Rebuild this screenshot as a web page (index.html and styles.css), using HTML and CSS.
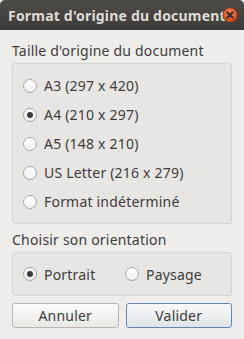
FILE: index.html
```html
<!DOCTYPE html>
<html lang="fr">

<head>
    <meta charset="UTF-8">
    <meta name="viewport" content="width=device-width, initial-scale=1.0">
    <title>Format d'origine du document</title>
    <link rel="stylesheet" href="styles.css">
</head>

<body>
    <div class="fenetre">
        <div class="barre-titre">
            <span class="titre">Format d'origine du document</span>
            <span class="fermer">
                <svg width="16" height="16" viewBox="0 0 16 16">
                    <defs>
                        <radialGradient id="orange" cx="50%" cy="35%" r="60%">
                            <stop offset="0" stop-color="#f58a5a" />
                            <stop offset="1" stop-color="#d9491a" />
                        </radialGradient>
                    </defs>
                    <circle cx="8" cy="8" r="7.2" fill="url(#orange)" stroke="#8c3514" stroke-width="0.8" />
                    <path d="M5.2 5.2 L10.8 10.8 M10.8 5.2 L5.2 10.8" stroke="#3a2e28" stroke-width="2" stroke-linecap="round" />
                </svg>
            </span>
        </div>

        <form class="contenu" id="frmFormat">
            <h2 class="etiquette">Taille d'origine du document</h2>
            <div class="groupe liste">
                <label class="radio"><input type="radio" name="taille" value="a3"><span class="rond"></span>A3 (297 x 420)</label>
                <label class="radio"><input type="radio" name="taille" value="a4" checked><span class="rond"></span>A4 (210 x 297)</label>
                <label class="radio"><input type="radio" name="taille" value="a5"><span class="rond"></span>A5 (148 x 210)</label>
                <label class="radio"><input type="radio" name="taille" value="letter"><span class="rond"></span>US Letter (216 x 279)</label>
                <label class="radio"><input type="radio" name="taille" value="aucun"><span class="rond"></span>Format indéterminé</label>
            </div>

            <h2 class="etiquette">Choisir son orientation</h2>
            <div class="groupe orientation">
                <label class="radio"><input type="radio" name="orientation" value="portrait" checked><span class="rond"></span>Portrait</label>
                <label class="radio"><input type="radio" name="orientation" value="paysage"><span class="rond"></span>Paysage</label>
            </div>

            <div class="actions">
                <button type="button" class="bouton">Annuler</button>
                <button type="submit" class="bouton principal">Valider</button>
            </div>
        </form>
    </div>
</body>

</html>
```

FILE: styles.css
```css
* {
    margin: 0;
    padding: 0;
    box-sizing: border-box;
    font-family: 'Noto Sans', 'Open Sans', sans-serif;
}

html,
body {
    background: #eeedea;
}

body {
    width: 244px;
    height: 339px;
    color: #3c3c3c;
}

.fenetre {
    display: flex;
    flex-direction: column;
    height: 100%;
}

.barre-titre {
    position: relative;
    height: 30px;
    display: flex;
    align-items: center;
    padding-left: 8px;
    background: linear-gradient(#4d4c47, #3c3b37);
    border-radius: 5px 5px 0 0;
}

.titre {
    font-size: 14px;
    font-weight: bold;
    letter-spacing: 0.2px;
    color: #dfdbd2;
    white-space: nowrap;
}

/* le bouton de fermeture chevauche la fin du titre */
.fermer {
    position: absolute;
    right: 6px;
    top: 7px;
    display: flex;
    width: 16px;
    height: 16px;
}

.contenu {
    padding: 12px 12px 0;
    display: flex;
    flex-direction: column;
}

.etiquette {
    font-size: 14px;
    font-weight: normal;
    letter-spacing: 0.2px;
    line-height: 18px;
    margin-bottom: 3px;
}

.groupe {
    background: #e8e6e2;
    border: 1px solid #d5d2cd;
    border-radius: 3px;
    padding: 7px 10px;
}

.liste {
    display: flex;
    flex-direction: column;
    margin-bottom: 7px;
}

.liste .radio {
    height: 29px;
}

.orientation {
    display: grid;
    grid-template-columns: 102px 1fr;
}

.orientation .radio {
    height: 28px;
}

.radio {
    display: flex;
    align-items: center;
    gap: 7px;
    font-size: 14px;
    letter-spacing: 0.2px;
    cursor: pointer;
}

.radio input {
    display: none;
}

.rond {
    width: 14px;
    height: 14px;
    border-radius: 50%;
    border: 1px solid #a7a49e;
    background: linear-gradient(#ffffff, #f1f0ee);
    display: flex;
    align-items: center;
    justify-content: center;
}

.radio input:checked+.rond::after {
    content: "";
    width: 6px;
    height: 6px;
    border-radius: 50%;
    background: #3c3c3c;
}

.actions {
    display: flex;
    gap: 7px;
    margin-top: 7px;
}

.bouton {
    flex: 1;
    height: 25px;
    font-size: 14px;
    letter-spacing: 0.2px;
    color: #3c3c3c;
    border: 1px solid #b8b5af;
    border-radius: 3px;
    background: linear-gradient(#fcfcfb, #e9e8e5);
    cursor: pointer;
}

.bouton.principal {
    border-color: #5f89b3;
    background: linear-gradient(#f8f9fa, #e0e4e8);
}
```
